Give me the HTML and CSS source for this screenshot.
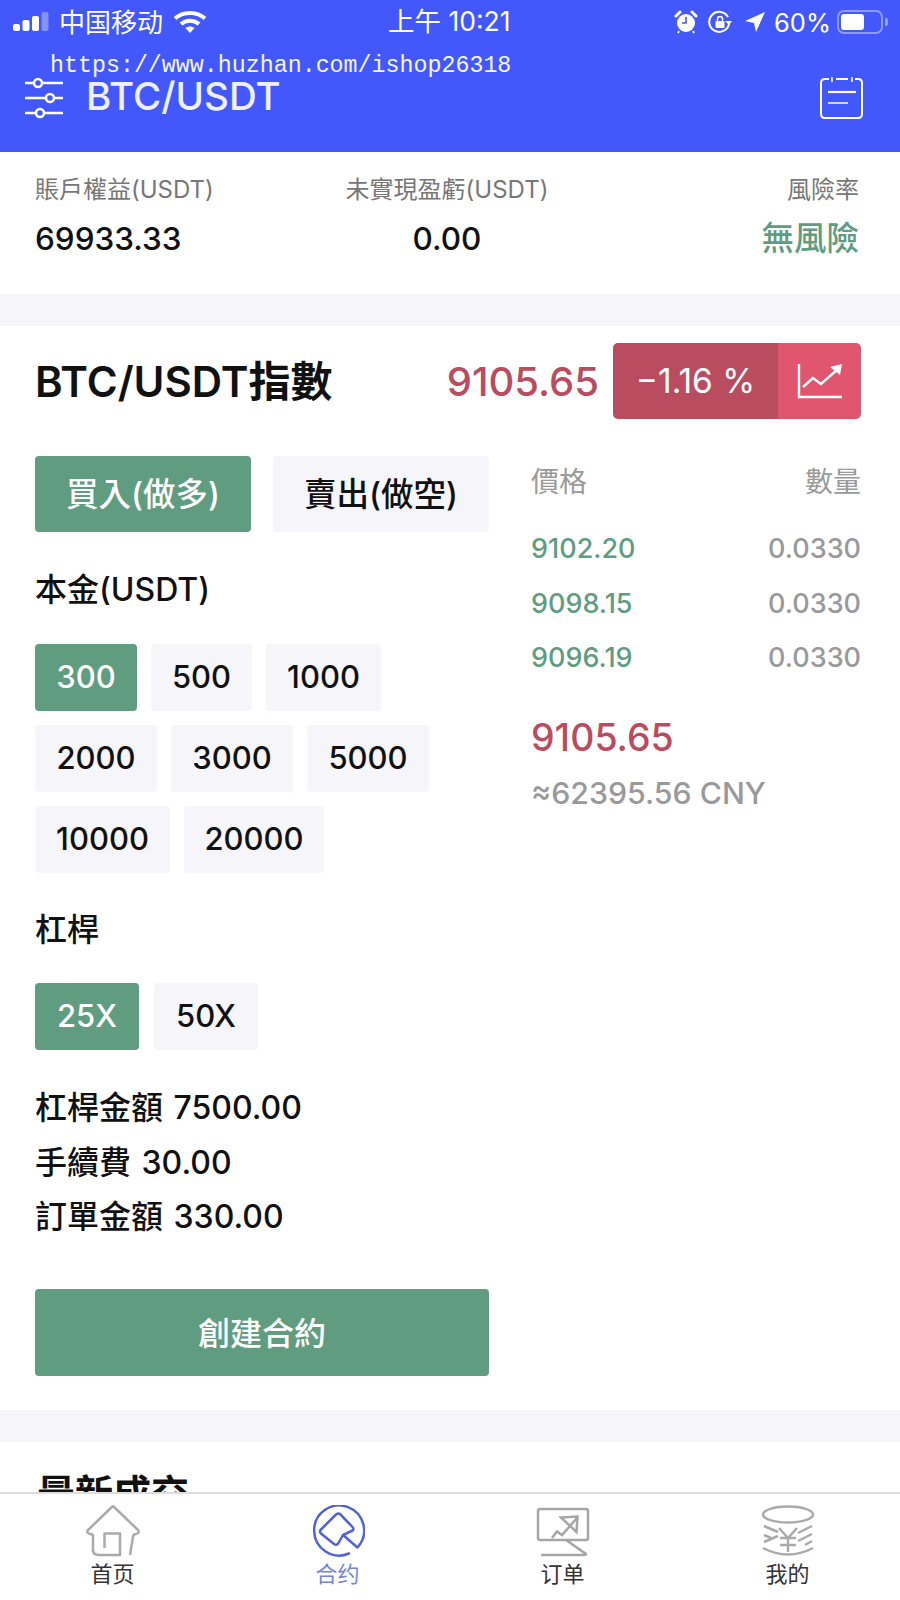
FILE: index.html
```html
<!DOCTYPE html>
<html lang="zh-Hant">
<head>
  <meta charset="UTF-8" />
  <meta name="viewport" content="width=device-width, initial-scale=1.0"/>
  <title>BTC/USDT</title>
  <link rel="stylesheet" href="styles.css">
</head>
<body>
  <div class="page">
    <header class="top">
      <div class="status">
        <div class="status-left">
          <svg class="signal" width="38" height="20" viewBox="0 0 38 20">
            <rect x="0" y="12" width="7" height="7" rx="2" fill="#fff"/>
            <rect x="9.5" y="8" width="7" height="11" rx="2" fill="#fff"/>
            <rect x="19" y="4" width="7" height="15" rx="2" fill="#fff"/>
            <rect x="28.5" y="0" width="7" height="19" rx="2" fill="#fff" opacity=".35"/>
          </svg>
          <span class="carrier">中国移动</span>
          <svg width="34" height="24" viewBox="0 0 34 24">
            <path d="M2 8.5 C10 1 24 1 32 8.5" fill="none" stroke="#fff" stroke-width="4"/>
            <path d="M8 14 C13 9.5 21 9.5 26 14" fill="none" stroke="#fff" stroke-width="4"/>
            <path d="M12.5 18 C15 16 19 16 21.5 18 L17 23 Z" fill="#fff"/>
          </svg>
        </div>
        <div class="clock">上午 10:21</div>
        <div class="status-right">
          <svg width="24" height="24" viewBox="0 0 24 24">
            <circle cx="12" cy="13" r="9" fill="#fff"/>
            <path d="M2 6 L6 2 M18 2 L22 6" stroke="#fff" stroke-width="3" stroke-linecap="round"/>
            <path d="M12 7 V13 H8" fill="none" stroke="#4358fb" stroke-width="1.6"/>
            <path d="M5 21 L4 23 M19 21 L20 23" stroke="#fff" stroke-width="2"/>
          </svg>
          <svg class="lock" width="24" height="24" viewBox="0 0 24 24">
            <path d="M21 14 A10 10 0 1 1 20 7" fill="none" stroke="#fff" stroke-width="2"/>
            <path d="M17 11 L24 11 L21 15 Z" fill="#fff"/>
            <rect x="7.5" y="11" width="9" height="7" rx="1" fill="#fff"/>
            <path d="M9.5 11 V9 A2.5 2.5 0 0 1 14.5 9 V11" fill="none" stroke="#fff" stroke-width="1.5"/>
          </svg>
          <svg class="arrow" width="22" height="22" viewBox="0 0 22 22">
            <path d="M21 1 L12 21 L10 12 L1 10 Z" fill="#fff"/>
          </svg>
          <span class="battery-text">60%</span>
          <div class="battery"><div class="battery-fill"></div></div>
          <div class="battery-cap"></div>
        </div>
      </div>
      <div class="nav">
        <div class="nav-left">
          <svg width="40" height="44" viewBox="0 0 40 44">
            <g fill="none" stroke="#fff" stroke-width="2.5">
              <path d="M1 7 H10 M18 7 H39"/>
              <circle cx="14" cy="7" r="4"/>
              <path d="M1 22 H22 M30 22 H39"/>
              <circle cx="26" cy="22" r="4"/>
              <path d="M1 37 H12 M20 37 H39"/>
              <circle cx="16" cy="37" r="4"/>
            </g>
          </svg>
          <span class="nav-title">BTC/USDT</span>
        </div>
        <svg class="nav-note" width="44" height="44" viewBox="0 0 44 44">
          <g fill="none" stroke="#fff" stroke-width="2">
            <path d="M9 3 H5 Q1 3 1 7 V38 Q1 42 5 42 H38 Q42 42 42 38 V7 Q42 3 38 3 H35"/>
            <path d="M12 1 V6 M32 1 V6" stroke-width="1.5"/>
            <path d="M16 3 H28" stroke-width="2"/>
            <path d="M8 16 H36" stroke-width="2.2"/>
            <path d="M8 27 H28" stroke-width="1.5"/>
          </g>
        </svg>
      </div>
      <div class="watermark">https://www.huzhan.com/ishop26318</div>
    </header>

    <main class="content">
      <section class="summary">
        <div class="sum-col">
          <div class="sum-label">賬戶權益(USDT)</div>
          <div class="sum-value">69933.33</div>
        </div>
        <div class="sum-col sum-center">
          <div class="sum-label">未實現盈虧(USDT)</div>
          <div class="sum-value">0.00</div>
        </div>
        <div class="sum-col sum-right">
          <div class="sum-label">風險率</div>
          <div class="sum-value sum-safe">無風險</div>
        </div>
      </section>

      <section class="trade">
        <div class="trade-head">
          <h2 class="trade-title">BTC/USDT指數</h2>
          <div class="trade-price">
            <span class="price-big">9105.65</span>
            <div class="badge">
              <span class="badge-pct">−1.16 %</span>
              <span class="badge-chart">
                <svg width="46" height="36" viewBox="0 0 46 36">
                  <g fill="none" stroke="#fff" stroke-width="2.4">
                    <path d="M2 1 V34 H45"/>
                    <path d="M6 24 L16 15 L24 21 L41 6"/>
                  </g>
                  <path d="M33 4 L45 1 L43 12 Z" fill="#fff"/>
                </svg>
              </span>
            </div>
          </div>
        </div>

        <div class="trade-body">
          <div class="order">
            <div class="sides">
              <button class="side side-on">買入(做多)</button>
              <button class="side">賣出(做空)</button>
            </div>

            <div class="field-label label-amount">本金(USDT)</div>
            <div class="amounts">
              <span class="chip chip-on w102">300</span>
              <span class="chip w101">500</span>
              <span class="chip w115">1000</span>
              <span class="chip w122">2000</span>
              <span class="chip w122">3000</span>
              <span class="chip w122">5000</span>
              <span class="chip w135">10000</span>
              <span class="chip w140">20000</span>
            </div>

            <div class="field-label label-lever">杠桿</div>
            <div class="levers">
              <span class="chip chip-on w104">25X</span>
              <span class="chip w104">50X</span>
            </div>

            <div class="figures">
              <div>杠桿金額 7500.00</div>
              <div>手續費 30.00</div>
              <div>訂單金額 330.00</div>
            </div>

            <button class="create">創建合約</button>
          </div>

          <div class="book">
            <div class="book-head"><span>價格</span><span>數量</span></div>
            <div class="book-row"><span class="book-price">9102.20</span><span>0.0330</span></div>
            <div class="book-row"><span class="book-price">9098.15</span><span>0.0330</span></div>
            <div class="book-row"><span class="book-price">9096.19</span><span>0.0330</span></div>
            <div class="book-last">9105.65</div>
            <div class="book-cny">≈62395.56 CNY</div>
          </div>
        </div>
      </section>

      <section class="latest">
        <h2 class="latest-title">最新成交</h2>
      </section>
    </main>

    <nav class="tabs">
      <a class="tab">
        <svg width="54" height="52" viewBox="0 0 54 52">
          <g fill="none" stroke="#aaa" stroke-width="2.5" stroke-linejoin="round">
            <path d="M7 47 V31 Q7 29 4 29 Q0 28 2 25 L27 1 L52 25 Q54 28 50 29 Q47 29 47 32 L44 50"/>
            <path d="M18.5 43 V28.5 H34 V50 H13 Q7 50 7 45"/>
          </g>
        </svg>
        <span>首页</span>
      </a>
      <a class="tab tab-on">
        <svg width="54" height="52" viewBox="0 0 54 52">
          <path d="M38 48.5 A25 25 0 1 1 46.5 42.5 L32 30 L27.5 38 Q25.5 41 23 39 L10 28.5 Q8 26.5 10 24.5 L25 9.5 Q27.5 7.5 29.5 9.5 L41.5 22 Q43.5 24 41.5 25.5 L32 30" fill="none" stroke="#5361d6" stroke-width="2.5" stroke-linecap="round" stroke-linejoin="round"/>
        </svg>
        <span>合约</span>
      </a>
      <a class="tab">
        <svg width="54" height="52" viewBox="0 0 54 52">
          <g fill="none" stroke="#a6a6a6" stroke-width="2.5">
            <path d="M30 35 H4 Q2 35 2 33 V6 Q2 4 4 4 H50 Q52 4 52 6 V33 Q52 35 50 35 H30 L50 49 Q50 50 48 50 H5"/>
            <path d="M16 33 L21 26.5 L26 30 L41 13"/>
            <path d="M25 12.5 L41.5 11.5 L40.5 27 Z"/>
          </g>
        </svg>
        <span>订单</span>
      </a>
      <a class="tab">
        <svg width="54" height="52" viewBox="0 0 54 52">
          <g fill="none" stroke="#aaa" stroke-width="2.5">
            <ellipse cx="27" cy="9.5" rx="25" ry="8"/>
            <path d="M3 21 L17 27 M17 31 L3 37 M3 30 L10 33"/>
            <path d="M51 21 L37 28 M51 29 L37 36 M51 36 L44 40"/>
            <path d="M2 43 Q27 56 52 43"/>
            <path d="M18 23 L27 33 L36 23 M27 33 V47 M19 33 H35 M19 40 H35"/>
          </g>
        </svg>
        <span>我的</span>
      </a>
    </nav>
  </div>
</body>
</html>
```

FILE: styles.css
```css
* {
  box-sizing: border-box;
}

body {
  margin: 0;
  font-family: Inter, "Noto Sans CJK TC", sans-serif;
  background-color: #fff;
  color: #111;
}

.page {
  width: 900px;
  height: 1600px;
  display: flex;
  flex-direction: column;
  overflow: hidden;
}

/* top blue bar */
.top {
  position: relative;
  height: 152px;
  background-color: #4358fb;
  color: #fff;
  flex-shrink: 0;
}

.status {
  height: 44px;
  padding: 0 12px 0 13px;
  display: flex;
  justify-content: space-between;
  align-items: center;
  position: relative;
}

.status-left {
  display: flex;
  align-items: center;
}

.signal {
  margin-right: 8px;
}

.carrier {
  font-size: 26px;
  line-height: 40px;
  margin-right: 10px;
  margin-top: -3px;
  font-family: "Noto Sans CJK SC", sans-serif;
}

.clock {
  position: absolute;
  left: 388px;
  top: 1px;
  font-size: 26.5px;
  line-height: 40px;
}

.status-right {
  display: flex;
  align-items: center;
  font-size: 25.5px;
}

.lock {
  margin-left: 10px;
}

.arrow {
  margin-left: 12px;
}

.battery-text {
  margin-left: 8px;
}

.battery {
  width: 46px;
  height: 24px;
  margin-left: 6px;
  border: 2px solid rgba(255, 255, 255, .4);
  border-radius: 7px;
  padding: 2px;
}

.battery-fill {
  width: 60%;
  height: 100%;
  background-color: #fff;
  border-radius: 3px;
}

.battery-cap {
  width: 3px;
  height: 8px;
  margin-left: 2px;
  background-color: rgba(255, 255, 255, .4);
  border-radius: 0 2px 2px 0;
}

.nav {
  display: flex;
  justify-content: space-between;
  align-items: center;
  padding: 32px 36px 0 24px;
}

.nav-left {
  display: flex;
  align-items: center;
  gap: 22px;
}

.nav-title {
  font-size: 38.5px;
  font-weight: 500;
  color: #eef0ff;
  margin-top: -4px;
}

.watermark {
  position: absolute;
  left: 50px;
  top: 52px;
  font-family: "Liberation Mono", monospace;
  font-size: 23.3px;
  line-height: 28px;
  color: #f4f5ff;
  white-space: nowrap;
}

.content {
  flex: 1;
  overflow: hidden;
  background-color: #f5f5fa;
}

/* account summary */
.summary {
  height: 142px;
  background-color: #fff;
  padding: 21px 41px 0 35px;
  display: grid;
  grid-template-columns: 1fr auto 1fr;
  margin-bottom: 32px;
}

.sum-center {
  text-align: center;
}

.sum-right {
  text-align: right;
}

.sum-label {
  font-size: 24px;
  line-height: 34px;
  color: #777;
}

.sum-value {
  margin-top: 12px;
  font-size: 31.5px;
  line-height: 40px;
  font-weight: 500;
}

.sum-safe {
  color: #5f9c80;
  font-size: 32.5px;
}

/* trade panel */
.trade {
  height: 1084px;
  background-color: #fff;
  padding: 17px 39px 0 35px;
  margin-bottom: 32px;
}

.trade-head {
  height: 76px;
  display: flex;
  justify-content: space-between;
  align-items: center;
}

.trade-title {
  margin: 0 0 6px;
  font-size: 42px;
  font-weight: 600;
  color: #111;
}

.trade-price {
  display: flex;
  align-items: center;
  gap: 14px;
}

.price-big {
  font-size: 40px;
  font-weight: 500;
  color: #b94c5f;
}

.badge {
  width: 248px;
  height: 76px;
  display: flex;
  border-radius: 5px;
  overflow: hidden;
  color: #fff;
}

.badge-pct {
  width: 165px;
  background-color: #b94c5f;
  font-size: 33.5px;
  display: flex;
  align-items: center;
  justify-content: center;
}

.badge-chart {
  flex: 1;
  background-color: #e0566f;
  display: flex;
  align-items: center;
  justify-content: center;
}

.trade-body {
  display: flex;
  justify-content: space-between;
  margin-top: 37px;
}

.order {
  width: 454px;
}

.sides {
  display: flex;
  justify-content: space-between;
}

.side {
  width: 216px;
  height: 76px;
  border: none;
  border-radius: 4px;
  background-color: #f5f5fa;
  color: #111;
  font-family: inherit;
  font-size: 32.5px;
  font-weight: 500;
  padding: 0 0 6px;
}

.side-on {
  background-color: #5f9c80;
  color: #fff;
}

.field-label {
  font-size: 32px;
  font-weight: 500;
  line-height: 44px;
}

.label-amount {
  margin-top: 36px;
}

.label-lever {
  margin-top: 35px;
}

.amounts {
  width: 420px;
  margin-top: 32px;
  display: flex;
  flex-wrap: wrap;
  gap: 14px 14px;
}

.levers {
  display: flex;
  gap: 15px;
  margin-top: 31px;
}

.chip {
  height: 67px;
  padding-bottom: 3px;
  background-color: #f5f5fa;
  border-radius: 4px;
  font-size: 31px;
  font-weight: 500;
  display: flex;
  align-items: center;
  justify-content: center;
}

.chip-on {
  background-color: #5f9c80;
  color: #fff;
}

.w101 { width: 101px; }
.w102 { width: 102px; }
.w104 { width: 104px; }
.w115 { width: 115px; }
.w122 { width: 122px; }
.w135 { width: 135px; }
.w140 { width: 140px; }

.figures {
  margin-top: 31px;
  font-size: 32px;
  font-weight: 500;
  line-height: 54.5px;
  word-spacing: 2px;
}

.create {
  display: block;
  width: 100%;
  height: 87px;
  margin-top: 44px;
  border: none;
  border-radius: 4px;
  background-color: #5f9c80;
  color: #fff;
  font-family: inherit;
  font-size: 32px;
  font-weight: 500;
  padding: 0 0 3px;
}

.book {
  width: 330px;
  color: #999;
}

.book-head {
  display: flex;
  justify-content: space-between;
  font-size: 28px;
  line-height: 52px;
}

.book-row {
  display: flex;
  justify-content: space-between;
  font-size: 27px;
  font-weight: 500;
  line-height: 54.5px;
}

.book-head + .book-row {
  margin-top: 14px;
}

.book-price {
  color: #5f9c80;
}

.book-last {
  margin-top: 27px;
  font-size: 37.5px;
  line-height: 50px;
  font-weight: 500;
  color: #b94c5f;
}

.book-cny {
  margin-top: 10px;
  font-size: 30.3px;
  font-weight: 500;
  line-height: 40px;
}

.latest {
  height: 60px;
  background-color: #fff;
  padding: 26px 37px 0;
}

.latest-title {
  margin: 0;
  font-size: 38px;
  line-height: 50px;
  font-weight: 600;
}

/* bottom tabs */
.tabs {
  height: 108px;
  flex-shrink: 0;
  background-color: #fff;
  border-top: 2px solid #ddd;
  display: grid;
  grid-template-columns: repeat(4, 225px);
}

.tab {
  display: flex;
  flex-direction: column;
  align-items: center;
  padding-top: 11px;
  font-size: 22px;
  line-height: 30px;
  color: #333;
  font-family: "Noto Sans CJK SC", sans-serif;
}

.tab-on {
  color: #7784d8;
}
```
